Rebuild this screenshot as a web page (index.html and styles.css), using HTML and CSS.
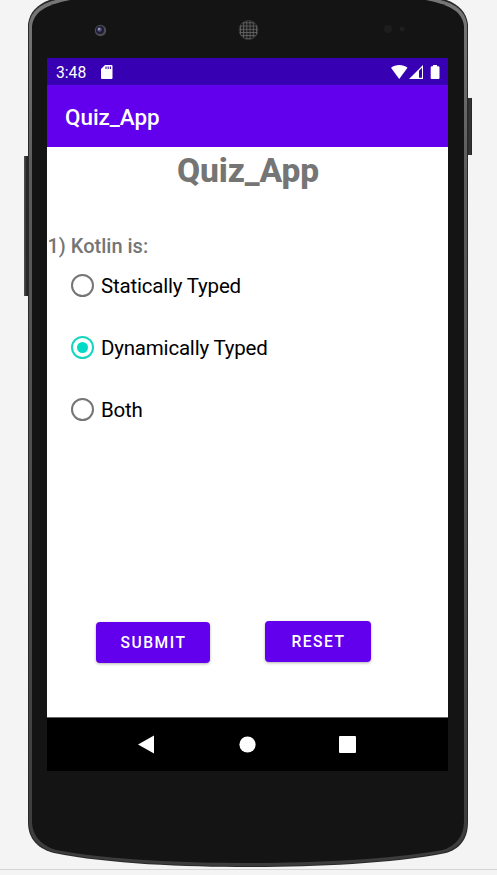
FILE: index.html
```html
<!DOCTYPE html>
<html lang="en">
<head>
<meta charset="utf-8">
<title>Quiz_App</title>
<link rel="stylesheet" href="styles.css">
</head>
<body>
<div class="stage">
  <svg class="device" width="497" height="875" viewBox="0 0 497 875" aria-hidden="true">
    <defs>
      <linearGradient id="edge" x1="0" y1="0" x2="0" y2="1">
        <stop offset="0" stop-color="#777"/><stop offset=".2" stop-color="#5c5c5c"/><stop offset="1" stop-color="#3c3c3c"/>
      </linearGradient>
      <linearGradient id="key" x1="0" x2="1"><stop offset="0" stop-color="#555"/><stop offset=".5" stop-color="#292929"/><stop offset="1" stop-color="#222"/></linearGradient>
      <linearGradient id="key2" x1="0" x2="1"><stop offset="0" stop-color="#222"/><stop offset=".6" stop-color="#383838"/><stop offset="1" stop-color="#222"/></linearGradient>
      <pattern id="mesh" width="3.2" height="3.2" patternUnits="userSpaceOnUse"><path d="M0 .5H3.2M.5 0V3.2" stroke="#696969" stroke-width=".8"/></pattern>
    </defs>
    <path d="M0 869.5H497" stroke="#d4d4d4"/>
    <rect x="24" y="156" width="5" height="140" fill="url(#key)"/>
    <rect x="467" y="98" width="5" height="57" fill="url(#key2)"/>
    <path d="M28 24C30 10 40 2 56 -2H440C456 2 466 10 468 24V822C468 840 459 849 446 853C390 864 310 867 248 867C186 867 108 864 54 853C39 849 28 840 28 822Z" fill="#292929"/>
    <path d="M29 24C31 11 41 3 60 -1H436C455 3 465 11 467 24V822C467 839 458 848 445 852C390 863 310 866 248 866C186 866 108 863 54 852C40 848 29 839 29 822Z" fill="url(#edge)"/>
    <path d="M32 26C34 12 45 4 76 -1H420C451 4 462 12 464 26V821C464 837 455 846 443 850C388 860 309 863 248 863C187 863 109 860 56 850C43 846 32 837 32 821Z" fill="#141414"/>
    <circle cx="100.5" cy="30.5" r="5.7" fill="#4b4b51"/><circle cx="100" cy="30" r="4" fill="#1d1b36"/><circle cx="99.5" cy="29.5" r="2.2" fill="#54517b"/><circle cx="99" cy="29" r=".9" fill="#b6b5d0"/>
    <circle cx="248.500" cy="30" r="9.800" fill="#191919"/><circle cx="248.500" cy="30" r="9.500" fill="url(#mesh)" stroke="#454545" stroke-width=".6"/>
    <circle cx="388" cy="29" r="4" fill="#1d1d1d"/><circle cx="402" cy="29" r="2.500" fill="#1e1e1e"/>
  </svg>
  <main class="screen">
    <div class="status">
      <span class="clock">3:48</span>
      <svg class="sd" width="12" height="14" viewBox="0 0 12 14"><path d="M4 0H10.500Q11.500 0 11.500 1V13Q11.500 14 10.500 14H1Q0 14 0 13V4Z" fill="#fff"/><path d="M5 1.500V4M7.200 1.500V4M9.400 1.500V4" stroke="#3700b3" stroke-width="1.100"/></svg>
      <svg class="signals" width="49" height="14" viewBox="0 0 49 14" fill="#fff"><path d="M0 2.700C4.500-.9 12-.9 16.500 2.700L8.200 14Z"/><path fill-rule="evenodd" d="M18 14L32 0V14ZM28 5.800V12.800H31V2.800Z"/><path d="M42 0H46V1.300H47.200Q48.500 1.300 48.500 2.500V13Q48.500 14 47.500 14H40.800Q39.700 14 39.700 13V2.500Q39.700 1.300 41 1.300H42Z"/></svg>
    </div>
    <header class="appbar">Quiz_App</header>
    <section class="content">
      <h1 class="title">Quiz_App</h1>
      <p class="question">1) Kotlin is:</p>
      <div class="options">
        <label class="option"><span class="radio"></span><span>Statically Typed</span></label>
        <label class="option"><span class="radio checked"></span><span>Dynamically Typed</span></label>
        <label class="option"><span class="radio"></span><span>Both</span></label>
      </div>
      <div class="actions">
        <button class="btn submit">SUBMIT</button>
        <button class="btn reset">RESET</button>
      </div>
    </section>
    <nav class="navbar">
      <svg width="401" height="53" viewBox="0 0 401 53" fill="#fff"><path d="M91 26.500L107 17.500V35.500Z"/><circle cx="200.500" cy="26.500" r="8.100"/><rect x="292" y="18" width="17" height="17" rx="1"/></svg>
    </nav>
  </main>
</div>
</body>
</html>
```

FILE: styles.css
```css
* { box-sizing: border-box; }
body { margin: 0; background: #f4f4f4; font-family: Roboto, "Liberation Sans", sans-serif; }
.stage { position: relative; width: 497px; height: 875px; padding: 58px 0 0 47px; overflow: hidden; }
.device { position: absolute; left: 0; top: 0; }
.screen { position: relative; width: 401px; height: 713px; background: #fff; display: flex; flex-direction: column; }
.status { height: 27px; background: #3700b3; color: #fff; display: flex; align-items: center; padding: 0 8px 0 9px; }
.clock { font-size: 15.7px; width: 44.5px; line-height: 27px; padding-top: 1px; }
.signals { margin-left: auto; }
.appbar { height: 62px; background: #6200ee; color: #fff; font-size: 22.4px; font-weight: 500; line-height: 62px; padding: 1px 0 0 18px; }
.content { flex: 1; display: flex; flex-direction: column; }
.title { margin: 4px 0 0 1px; text-align: center; color: #757575; font-size: 33.5px; font-weight: 800; line-height: 40px; letter-spacing: -.1px; }
.question { margin: 43px 0 0 .5px; color: #757575; font-size: 20px; font-weight: 500; line-height: 24px; }
.options { display: flex; flex-direction: column; gap: 38px; margin: 15px 0 0 24px; }
.option { display: flex; align-items: center; gap: 7px; height: 24px; font-size: 20.5px; letter-spacing: -.2px; color: #000; }
.option span:last-child { padding-top: 1px; }
.radio { width: 23px; height: 23px; border: 2px solid #757575; border-radius: 50%; display: flex; align-items: center; justify-content: center; }
.checked { border-color: #17d5bf; }
.checked::before { content: ""; width: 11px; height: 11px; border-radius: 50%; background: #03dac5; }
.actions { display: flex; align-items: flex-start; margin: 200px 0 0 49px; gap: 55px; }
.btn { border: 0; border-radius: 4px; padding: 1px 0 0 1px; height: 41px; background: #6200ee; color: #fff; font: 500 15.6px Roboto, sans-serif; letter-spacing: 1.5px; box-shadow: 0 1px 3px rgba(0,0,0,.3); }
.submit { width: 114px; margin-top: 1px; }
.reset { width: 106px; }
.navbar { height: 54px; background: #000; border-top: 1px solid #666; }
.navbar svg { display: block; }
```
